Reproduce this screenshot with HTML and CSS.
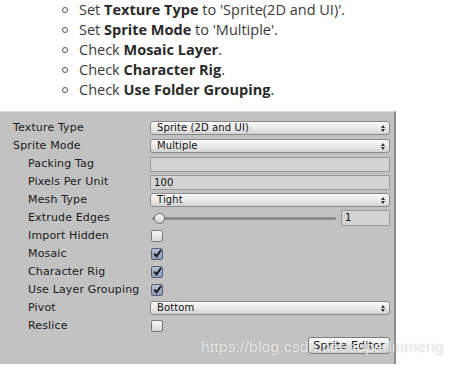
FILE: index.html
```html
<!DOCTYPE html>
<html>
<head>
<meta charset="utf-8">
<link rel="stylesheet" href="styles.css">
</head>
<body>
<ul class="steps">
  <li>Set <b>Texture Type</b> to 'Sprite(2D and UI)'.</li>
  <li>Set <b>Sprite Mode</b> to 'Multiple'.</li>
  <li>Check <b>Mosaic Layer</b>.</li>
  <li>Check <b>Character Rig</b>.</li>
  <li>Check <b>Use Folder Grouping</b>.</li>
</ul>
<div class="panel">
  <div class="rows">
    <div class="label">Texture Type</div>
    <div class="ctl"><div class="dropdown">Sprite (2D and UI)<span class="arrows"></span></div></div>
    <div class="label">Sprite Mode</div>
    <div class="ctl"><div class="dropdown">Multiple<span class="arrows"></span></div></div>
    <div class="label sub">Packing Tag</div>
    <div class="ctl"><div class="field"></div></div>
    <div class="label sub">Pixels Per Unit</div>
    <div class="ctl"><div class="field">100</div></div>
    <div class="label sub">Mesh Type</div>
    <div class="ctl"><div class="dropdown">Tight<span class="arrows"></span></div></div>
    <div class="label sub">Extrude Edges</div>
    <div class="ctl slider-row"><div class="slider"><div class="track"></div><div class="thumb"></div></div><div class="field num">1</div></div>
    <div class="label sub">Import Hidden</div>
    <div class="ctl"><div class="check"></div></div>
    <div class="label sub">Mosaic</div>
    <div class="ctl"><div class="check on"><svg viewBox="0 0 11 11" width="11" height="11"><path d="M2.2 5.6 L4.6 8.3 L9 2" fill="none" stroke="#111" stroke-width="1.9"/></svg></div></div>
    <div class="label sub">Character Rig</div>
    <div class="ctl"><div class="check on"><svg viewBox="0 0 11 11" width="11" height="11"><path d="M2.2 5.6 L4.6 8.3 L9 2" fill="none" stroke="#111" stroke-width="1.9"/></svg></div></div>
    <div class="label sub">Use Layer Grouping</div>
    <div class="ctl"><div class="check on"><svg viewBox="0 0 11 11" width="11" height="11"><path d="M2.2 5.6 L4.6 8.3 L9 2" fill="none" stroke="#111" stroke-width="1.9"/></svg></div></div>
    <div class="label sub">Pivot</div>
    <div class="ctl"><div class="dropdown">Bottom<span class="arrows"></span></div></div>
    <div class="label sub">Reslice</div>
    <div class="ctl"><div class="check"></div></div>
  </div>
  <div class="actions"><div class="button">Sprite Editor</div></div>
  <div class="watermark">https://blog.csdn.net/superlinmeng</div>
</div>
</body>
</html>
```
FILE: styles.css
```css
html, body {
  margin: 0;
  padding: 0;
  background: #fff;
}
body {
  width: 452px;
  height: 370px;
  overflow: hidden;
}
.steps {
  list-style: none;
  margin: 0;
  padding: 0 0 0 79px;
  font-family: "Open Sans", "Noto Sans", sans-serif;
  font-size: 14.5px;
  line-height: 20px;
  color: #3a3a3a;
  height: 111px;
}
.steps li {
  position: relative;
  white-space: nowrap;
}
.steps li::before {
  content: "";
  position: absolute;
  left: -17px;
  top: 7px;
  width: 4px;
  height: 4px;
  border: 1.3px solid #555;
  border-radius: 50%;
}
.steps b {
  color: #2a2a2a;
  font-weight: 700;
}
.panel {
  position: relative;
  width: 394px;
  height: 252px;
  background: #c2c2c2;
  border-top: 1px solid #dadada;
  border-right: 2px solid #8d8d8d;
  font-family: "DejaVu Sans", sans-serif;
  color: #111;
  box-sizing: content-box;
}
.rows {
  display: grid;
  grid-template-columns: 150px 240px;
  grid-auto-rows: 18px;
  padding-top: 7px;
}
.label {
  font-size: 11px;
  letter-spacing: 0.15px;
  line-height: 18px;
  padding-left: 13px;
  white-space: nowrap;
  color: #1a1a1a;
}
.label.sub {
  padding-left: 28px;
}
.ctl {
  display: flex;
  align-items: center;
}
.dropdown {
  position: relative;
  box-sizing: border-box;
  width: 240px;
  height: 14px;
  border: 1px solid #8a8a8a;
  border-radius: 3px;
  background: linear-gradient(#fbfbfb, #e6e6e6 60%, #d2d2d2);
  font-size: 10px;
  line-height: 12px;
  padding-left: 6px;
  letter-spacing: 0.1px;
}
.arrows {
  position: absolute;
  right: 6px;
  top: 3px;
  width: 0;
  height: 0;
}
.arrows::before, .arrows::after {
  content: "";
  position: absolute;
  left: -2px;
  border-left: 2px solid transparent;
  border-right: 2px solid transparent;
}
.arrows::before {
  top: 0;
  border-bottom: 3px solid #333;
}
.arrows::after {
  top: 4px;
  border-top: 3px solid #333;
}
.field {
  box-sizing: border-box;
  width: 240px;
  height: 15px;
  border: 1px solid #9a9a9a;
  background: #d3d3d3;
  font-size: 10px;
  line-height: 13px;
  padding-left: 3px;
  letter-spacing: 0.1px;
}
.slider-row {
  gap: 5px;
}
.slider {
  position: relative;
  width: 186px;
  height: 14px;
}
.track {
  position: absolute;
  left: 2px;
  right: 0;
  top: 6px;
  height: 3px;
  border-radius: 2px;
  background: #8b8b8b;
}
.thumb {
  position: absolute;
  left: 4px;
  top: 2px;
  width: 9px;
  height: 9px;
  border: 1px solid #707070;
  border-radius: 50%;
  background: linear-gradient(#fafafa, #cfcfcf);
}
.field.num {
  width: 49px;
  height: 16px;
  line-height: 14px;
}
.check {
  box-sizing: border-box;
  width: 12px;
  height: 12px;
  margin-left: 1px;
  border: 1px solid #7a7a7a;
  border-radius: 2px;
  background: linear-gradient(#f7f7f7, #d8d8d8);
}
.check.on {
  background: linear-gradient(#b8c0d6, #8e99b8);
  border-color: #5a6070;
}
.check svg {
  display: block;
  margin: -1px 0 0 -0.5px;
}
.actions {
  display: flex;
  justify-content: flex-end;
  padding: 2px 4px 0 0;
}
.button {
  box-sizing: border-box;
  width: 82px;
  height: 17px;
  border: 1px solid #7c7c7c;
  border-radius: 3px;
  background: linear-gradient(#fcfcfc, #e4e4e4 60%, #d0d0d0);
  font-size: 11px;
  line-height: 15px;
  text-align: center;
  letter-spacing: 0.2px;
}
.watermark {
  position: absolute;
  left: 201px;
  top: 226px;
  font-family: "Liberation Sans", Arial, sans-serif;
  font-size: 15.5px;
  color: rgba(255, 255, 255, 0.75);
  text-shadow: 0 0 1px rgba(120, 120, 120, 0.5);
  white-space: nowrap;
  letter-spacing: 0.2px;
}
```
